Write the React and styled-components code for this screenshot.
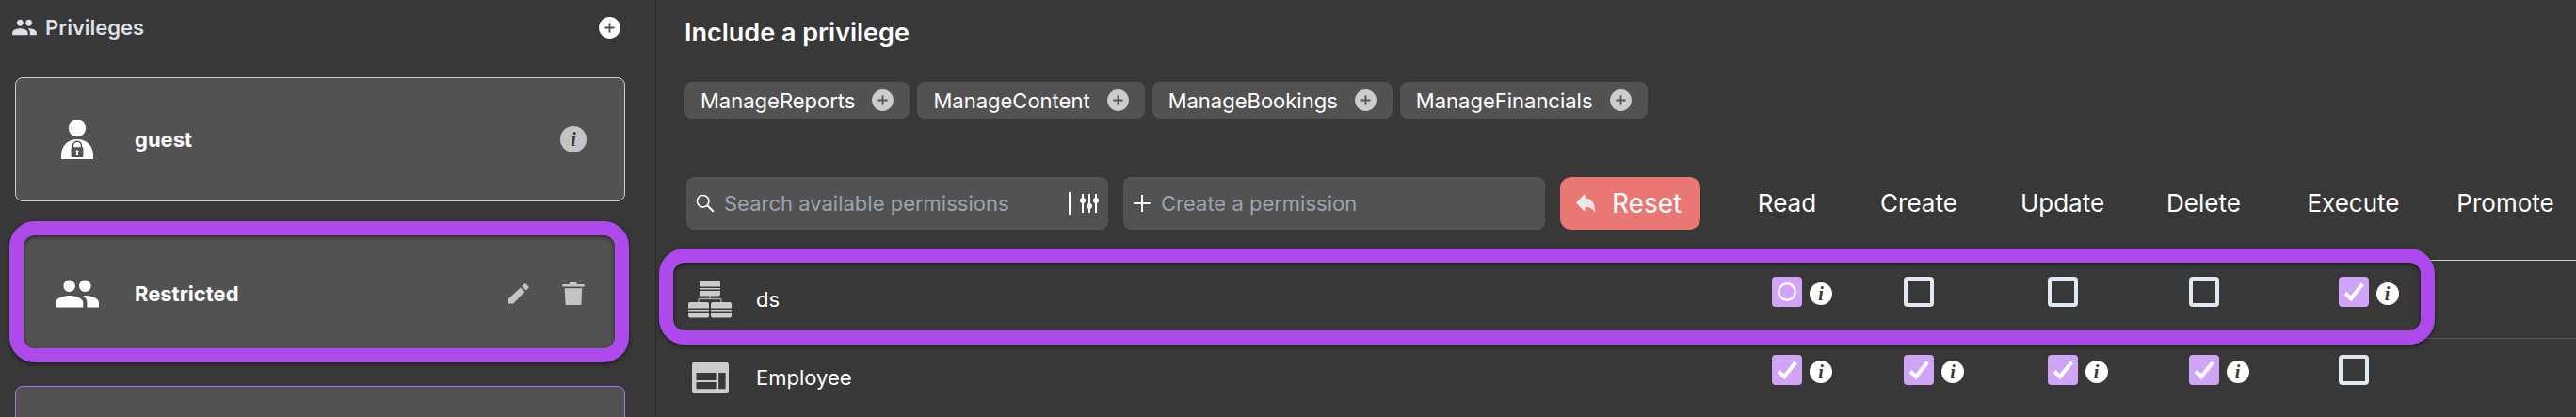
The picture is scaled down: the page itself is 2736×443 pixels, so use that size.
import styled, { createGlobalStyle, css } from 'styled-components'
import { useState } from 'react'
import { MdPeople } from 'react-icons/md'

const GlobalStyle = createGlobalStyle`
  * { box-sizing: border-box; }
  body {
    margin: 0;
    background: #383838;
    color: #ffffff;
    font-family: Inter, "Open Sans", sans-serif;
    font-size: 22px;
    overflow: hidden;
  }
  button, input { font: inherit; }
  svg { display: block; flex: none; }
`

const Page = styled.div`
  display: flex;
  height: 100vh;
  overflow: hidden;
`

const Sidebar = styled.aside`
  flex: 0 0 697px;
  padding: 0 32px 0 16px;
  border-right: 1px solid #292929;
`

const SidebarHeader = styled.header`
  display: flex;
  align-items: center;
  justify-content: space-between;
  height: 58px;
  margin: 0 0 24px -4px;
  padding-right: 5px;
`

const SidebarTitle = styled.h1`
  display: flex;
  align-items: center;
  gap: 8px;
  margin: 0;
  color: #dde0e7;
  font-size: 22px;
  font-weight: 600;
  line-height: 32px;
`

const IconButton = styled.button`
  display: flex;
  padding: 0;
  border: 0;
  background: none;
  color: ${p => p.$color || '#c4c4c4'};
  cursor: pointer;
`

const CardList = styled.ul`
  display: flex;
  flex-direction: column;
  gap: 32px;
  margin: 0;
  padding: 0;
  list-style: none;
`

const Card = styled.li`
  position: relative;
  display: flex;
  align-items: center;
  height: 132px;
  padding: 0 40px 0 42px;
  border: 1px solid ${p => p.$accent ? '#a876e6' : '#d0d0d0'};
  border-radius: 8px;
  background: #525252;
`

const CardIcon = styled.span`
  display: flex;
  justify-content: center;
  width: 46px;
  margin-right: 38px;
`

const CardName = styled.span`
  flex: 1;
  font-weight: 700;
  line-height: 32px;
`

const CardActions = styled.div`
  display: flex;
  align-items: center;
  gap: 35px;
  padding-right: 2px;
`

const ring = css`
  position: absolute;
  border: 15px solid #ae4aeb;
  border-radius: 27px;
  filter: drop-shadow(0 2px 2px rgba(0, 0, 0, 0.5));
  pointer-events: none;
`

const CardRing = styled.span`
  ${ring}
  inset: -12px -5px -8px -7px;
`

const RowRing = styled.span`
  ${ring}
  inset: -13px 150px -6px -27px;
`

const InfoButton = styled.button`
  display: flex;
  align-items: center;
  justify-content: center;
  width: ${p => p.$size}px;
  height: ${p => p.$size}px;
  padding: 0;
  border: 0;
  border-radius: 50%;
  background: ${p => p.$bg};
  color: #383838;
  font: italic bold 20px/24px "Liberation Serif", serif;
  cursor: pointer;
`

const Main = styled.main`
  flex: 1;
  min-width: 0;
  padding: 15px 0 0 30px;
`

const Heading = styled.h2`
  margin: 0 0 32px;
  font-size: 27px;
  font-weight: 600;
  line-height: 40px;
`

const Chips = styled.div`
  display: flex;
  gap: 8px;
`

const Chip = styled.button`
  display: flex;
  align-items: center;
  gap: 18px;
  height: 39px;
  padding: 0 17px;
  border: 0;
  border-radius: 8px;
  background: #525252;
  color: #ffffff;
  cursor: pointer;

  svg { color: #cccccc; }
`

const Table = styled.table`
  width: 100%;
  table-layout: fixed;
  border-collapse: separate;
  border-spacing: 0;
`

const Col = styled.col`
  width: ${p => p.$width}px;
`

const HeadCell = styled.th`
  padding: 62px 0 32px;
  border-bottom: 1px solid #d0d0d0;
  font-size: 26px;
  font-weight: 400;
  line-height: 32px;
`

const ToolsCell = styled(HeadCell)`
  padding-left: 2px;
  padding-right: 27px;
  font-size: 22px;
`

const Tools = styled.div`
  display: flex;
  gap: 16px;
`

const Field = styled.label`
  display: flex;
  flex: 1;
  align-items: center;
  gap: 10px;
  min-width: 0;
  height: 56px;
  padding: 0 10px;
  border-radius: 8px;
  background: #525252;
`

const FieldInput = styled.input`
  flex: 1;
  min-width: 0;
  padding: 0;
  border: 0;
  outline: 0;
  background: none;
  color: #ffffff;

  &::placeholder { color: #9ca3af; opacity: 1; }
`

const FilterButton = styled(IconButton)`
  height: 24px;
  align-items: center;
  padding-left: 10px;
  border-left: 2px solid #ffffff;
`

const ResetButton = styled.button`
  display: flex;
  align-items: center;
  gap: 18px;
  min-width: 149px;
  height: 56px;
  padding: 0 17px;
  border: 0;
  border-radius: 12px;
  background: #e97874;
  color: #ffffff;
  font-size: 28px;
  cursor: pointer;
`

const Row = styled.tr`
  position: relative;
  height: 83px;
`

const Cell = styled.td`
  height: 83px;
  padding: 17px 0 0;
  border-bottom: 1px solid #555555;
  vertical-align: top;

  tr:last-child > & { border-bottom-color: #343131; }
`

const NameCell = styled(Cell)`
  padding: 0;
  vertical-align: middle;
`

const EntityName = styled.div`
  display: flex;
  align-items: center;
  gap: 26px;
  padding-left: 4px;
  line-height: 32px;
`

const EntityIcon = styled.span`
  display: flex;
  justify-content: center;
  width: 46px;
`

const Permission = styled.div`
  display: grid;
  grid-template-columns: 1fr 32px 1fr;
  column-gap: 8px;
`

const CheckLabel = styled.label`
  position: relative;
  grid-column: 2;
  display: flex;

  svg {
    position: absolute;
    inset: 0;
    pointer-events: none;
  }
`

const CheckInput = styled.input`
  appearance: none;
  width: 32px;
  height: 32px;
  margin: 0;
  border: 4px solid ${p => p.$on ? '#d0a5f7' : '#e2e8f0'};
  border-radius: 4px;
  background: ${p => p.$on ? '#d0a5f7' : 'transparent'};
  cursor: pointer;
`

const InfoSlot = styled.div`
  padding-top: 6px;
`

const PlusCircle = () => (
  <svg width="23" height="23" viewBox="0 0 23 23">
    <circle cx="11.5" cy="11.5" r="11.4" fill="currentColor" />
    <path d="M11.5 6.4v10.2M6.4 11.5h10.2" stroke="#555555" strokeWidth="1.9" />
  </svg>
)

const GuestIcon = () => (
  <svg width="34" height="42" viewBox="0 0 34 42">
    <circle cx="17" cy="9.2" r="9.1" fill="#ffffff" />
    <path d="M0 42V38C0 28 7 21 17 21s17 7 17 17v4z" fill="#ffffff" />
    <path d="M12.5 30v-2.2a4.5 4.5 0 0 1 9 0V30" fill="none" stroke="#525252" strokeWidth="1.5" />
    <rect x="10.6" y="29.2" width="12.8" height="10.8" rx=".8" fill="#525252" />
    <path d="M17 32.2a1.8 1.8 0 0 1 .8 3.3l.3 2.6h-2.2l.3-2.6a1.8 1.8 0 0 1 .8-3.3z" fill="#ffffff" />
  </svg>
)

const PencilIcon = () => (
  <svg width="22" height="22" viewBox="0 0 22 22" fill="currentColor">
    <path d="M0 16.6 12.9 4.6l4.4 4.3L5.2 21.6H.8A.8.8 0 0 1 0 20.8z" />
    <path d="M14.4 3.1 16.9.7a1.4 1.4 0 0 1 2 0l2.3 2.5a1.4 1.4 0 0 1 0 1.9l-2.5 2.5z" />
  </svg>
)

const TrashIcon = () => (
  <svg width="24" height="24" viewBox="0 0 24 24" fill="currentColor">
    <path d="M8.6 0h6.2a.8.8 0 0 1 .8.8V2h7.2a1 1 0 0 1 1 1v1.6H.2V3a1 1 0 0 1 1-1h6.6V.8a.8.8 0 0 1 .8-.8z" />
    <path d="M2.6 6.2h18.6l-.8 16.8a.9.9 0 0 1-.9.9H4.5a.9.9 0 0 1-.9-.9z" />
  </svg>
)

const SearchIcon = () => (
  <svg width="20" height="20" viewBox="0 0 20 20" fill="none" stroke="#ffffff">
    <circle cx="7.7" cy="7.7" r="6.2" strokeWidth="1.7" />
    <path d="m12.2 12.2 6.6 6.6" strokeWidth="2.2" />
  </svg>
)

const PlusIcon = () => (
  <svg width="20" height="20" viewBox="0 0 20 20" stroke="#ffffff" strokeWidth="2">
    <path d="M10 1v18M1 10h18" />
  </svg>
)

const SlidersIcon = () => (
  <svg width="20" height="20" viewBox="0 0 20 20" fill="currentColor">
    <path d="M2 0h2v20H2zM9 0h2v20H9zM16 0h2v20h-2z" />
    <circle cx="3" cy="7" r="3" />
    <circle cx="10" cy="13" r="3" />
    <circle cx="17" cy="7" r="3" />
  </svg>
)

const ReplyIcon = () => (
  <svg width="20" height="20" viewBox="0 0 20 20" fill="#e8e8e8">
    <path d="M0 9.4 8.4.8q1-.9 1.3.4v3.4C16 5 20 9.5 20 18.2c0 .8-.6.9-.9.3C17 15 14 14 9.7 14v3.6q-.3 1.300-1.300.5z" />
  </svg>
)

const SchemaBox = ({ x, y }) => (
  <g transform={`translate(${x} ${y})`}>
    <path d="M0 6.600V2a2 2 0 0 1 2-2h18a2 2 0 0 1 2 2v4.600zM0 8.100h22v1.400H0zM0 11h22v3.500a2 2 0 0 1-2 2H2a2 2 0 0 1-2-2z" fill="#cccccc" />
  </g>
)

const SchemaIcon = () => (
  <svg width="46" height="40" viewBox="0 0 46 40">
    <path d="M23 16v3.500M11 24v-3.500q0-1 1-1h22q1 0 1 1V24" fill="none" stroke="#a8a8a8" strokeWidth="1.300" />
    <SchemaBox x={12} y={0} />
    <SchemaBox x={0} y={23} />
    <SchemaBox x={24} y={23} />
  </svg>
)

const ClassIcon = () => (
  <svg width="39" height="32" viewBox="0 0 39 32">
    <path
      fillRule="evenodd"
      fill="#cccccc"
      d="M2 0h35a2 2 0 0 1 2 2v28a2 2 0 0 1-2 2H2a2 2 0 0 1-2-2V2a2 2 0 0 1 2-2zM4.500 11v8h22v-8zM4.500 21v7.300h22V21zM28.200 11v17.300h7.400V11z"
    />
  </svg>
)

const CheckMark = () => (
  <svg width="32" height="32" viewBox="0 0 32 32" fill="none" stroke="#ffffff" strokeWidth="4">
    <path d="M7 17.500 13 23.200 25.300 7.800" />
  </svg>
)

const PartialMark = () => (
  <svg width="32" height="32" viewBox="0 0 32 32" fill="none" stroke="#ffffff" strokeWidth="2.400">
    <circle cx="16" cy="16" r="8.800" />
  </svg>
)

const chips = ['ManageReports', 'ManageContent', 'ManageBookings', 'ManageFinancials']

const actions = [
  { name: 'Read', width: 130 },
  { name: 'Create', width: 150 },
  { name: 'Update', width: 155 },
  { name: 'Delete', width: 145 },
  { name: 'Execute', width: 173 },
  { name: 'Promote', width: 150 },
]

const entities = [
  {
    name: 'ds',
    Icon: SchemaIcon,
    selected: true,
    values: { Read: 'partial', Create: 'off', Update: 'off', Delete: 'off', Execute: 'on' },
  },
  {
    name: 'Employee',
    Icon: ClassIcon,
    values: { Read: 'on', Create: 'on', Update: 'on', Delete: 'on', Execute: 'off' },
  },
]

function PermissionBox({ value, label }) {
  const [state, setState] = useState(value)
  const on = state !== 'off'

  return (
    <Permission>
      <CheckLabel>
        <CheckInput
          type="checkbox"
          aria-label={label}
          checked={on}
          $on={on}
          onChange={() => setState(on ? 'off' : 'on')}
        />
        {state === 'on' && <CheckMark />}
        {state === 'partial' && <PartialMark />}
      </CheckLabel>
      {on && (
        <InfoSlot>
          <InfoButton $size={24} $bg="#ffffff" aria-label={`${label} details`}>i</InfoButton>
        </InfoSlot>
      )}
    </Permission>
  )
}

export default function App() {
  const [search, setSearch] = useState('')
  const [permission, setPermission] = useState('')

  return (
    <Page>
      <GlobalStyle />
      <Sidebar>
        <SidebarHeader>
          <SidebarTitle>
            <MdPeople size={28} />
            Privileges
          </SidebarTitle>
          <IconButton $color="#ffffff" aria-label="Add privilege">
            <PlusCircle />
          </IconButton>
        </SidebarHeader>
        <CardList>
          <Card>
            <CardIcon><GuestIcon /></CardIcon>
            <CardName>guest</CardName>
            <InfoButton $size={28} $bg="#c4c4c4" aria-label="About guest">i</InfoButton>
          </Card>
          <Card $accent>
            <CardIcon><MdPeople size={50} /></CardIcon>
            <CardName>Restricted</CardName>
            <CardActions>
              <IconButton aria-label="Edit Restricted"><PencilIcon /></IconButton>
              <IconButton aria-label="Delete Restricted"><TrashIcon /></IconButton>
            </CardActions>
            <CardRing />
          </Card>
          <Card $accent />
        </CardList>
      </Sidebar>

      <Main>
        <Heading>Include a privilege</Heading>
        <Chips>
          {chips.map(name => (
            <Chip key={name}>
              {name}
              <PlusCircle />
            </Chip>
          ))}
        </Chips>

        <Table>
          <colgroup>
            <col />
            {actions.map(a => <Col key={a.name} $width={a.width} />)}
          </colgroup>
          <thead>
            <tr>
              <ToolsCell>
                <Tools>
                  <Field>
                    <SearchIcon />
                    <FieldInput
                      placeholder="Search available permissions"
                      aria-label="Search available permissions"
                      value={search}
                      onChange={e => setSearch(e.target.value)}
                    />
                    <FilterButton $color="#ffffff" aria-label="Filter">
                      <SlidersIcon />
                    </FilterButton>
                  </Field>
                  <Field>
                    <PlusIcon />
                    <FieldInput
                      placeholder="Create a permission"
                      aria-label="Create a permission"
                      value={permission}
                      onChange={e => setPermission(e.target.value)}
                    />
                  </Field>
                  <ResetButton onClick={() => { setSearch(''); setPermission('') }}>
                    <ReplyIcon />
                    Reset
                  </ResetButton>
                </Tools>
              </ToolsCell>
              {actions.map(a => <HeadCell key={a.name} scope="col">{a.name}</HeadCell>)}
            </tr>
          </thead>
          <tbody>
            {entities.map(({ name, Icon, selected, values }) => (
              <Row key={name}>
                <NameCell>
                  <EntityName>
                    <EntityIcon><Icon /></EntityIcon>
                    {name}
                  </EntityName>
                  {selected && <RowRing />}
                </NameCell>
                {actions.map(a => (
                  <Cell key={a.name}>
                    {values[a.name] && (
                      <PermissionBox value={values[a.name]} label={`${a.name} ${name}`} />
                    )}
                  </Cell>
                ))}
              </Row>
            ))}
          </tbody>
        </Table>
      </Main>
    </Page>
  )
}
